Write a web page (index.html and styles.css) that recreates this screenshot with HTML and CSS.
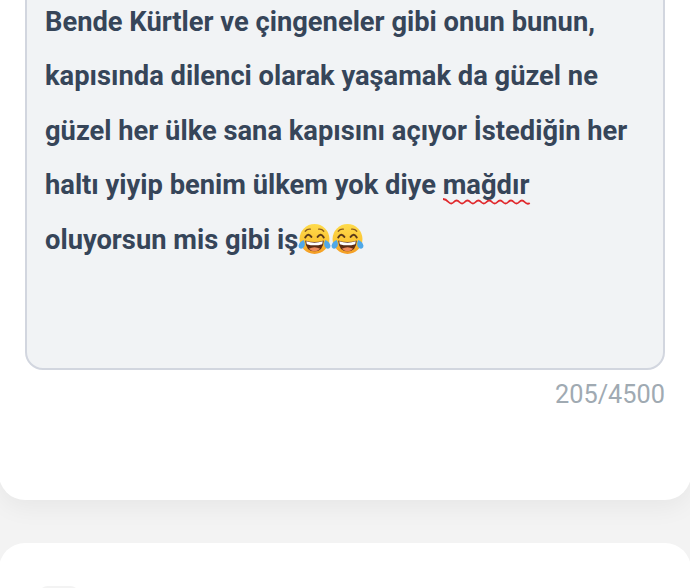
FILE: index.html
```html
<!DOCTYPE html>
<html lang="tr">
<head>
<meta charset="utf-8">
<title>Yorum</title>
<link rel="stylesheet" href="styles.css">
</head>
<body>
<main class="page">
  <section class="card card-form">
    <div class="textarea">
      <p class="line">Bende Kürtler ve çingeneler gibi onun bunun,</p>
      <p class="line">kapısında dilenci olarak yaşamak da güzel ne</p>
      <p class="line">güzel her ülke sana kapısını açıyor İstediğin her</p>
      <p class="line">haltı yiyip benim ülkem yok diye <span class="misspelled">mağdır<svg class="squiggle" viewBox="0 0 86 8" preserveAspectRatio="none" aria-hidden="true"><path d="M0 2 Q2.700 2 5.400 5 T10.800 5 T16.200 5 T21.600 5 T27 5 T32.400 5 T37.800 5 T43.200 5 T48.600 5 T54 5 T59.400 5 T64.800 5 T70.200 5 T75.600 5 T81 5 T86 6"/></svg></span></p>
      <p class="line">oluyorsun mis gibi iş<svg class="emoji" viewBox="0 0 32 32" aria-hidden="true"><use href="#joy"/></svg><svg class="emoji" viewBox="0 0 32 32" aria-hidden="true"><use href="#joy"/></svg></p>
    </div>
    <div class="counter">205/4500</div>
  </section>
  <section class="card card-next">
    <div class="pill"></div>
  </section>
</main>
<svg class="defs" width="0" height="0" aria-hidden="true">
  <defs>
    <linearGradient id="face" x1="0" y1="0" x2="0" y2="1">
      <stop offset="0" stop-color="#fedb4c"/>
      <stop offset="0.600" stop-color="#fbc433"/>
      <stop offset="1" stop-color="#f49a24"/>
    </linearGradient>
    <symbol id="joy" viewBox="0 0 32 32">
      <circle cx="16" cy="15.500" r="14.500" fill="url(#face)"/>
      <path d="M7 8 Q9 5.500 12 6" fill="none" stroke="#8a5a1e" stroke-width="1.200" stroke-linecap="round"/>
      <path d="M20 6 Q23 5.500 25 8" fill="none" stroke="#8a5a1e" stroke-width="1.200" stroke-linecap="round"/>
      <path d="M7 14 Q9.800 9 13 13.500" fill="none" stroke="#5b3a1a" stroke-width="1.900" stroke-linecap="round"/>
      <path d="M19 13.500 Q22.200 9 25 14" fill="none" stroke="#5b3a1a" stroke-width="1.900" stroke-linecap="round"/>
      <path d="M7 17 Q16 20 25 17 Q24.500 27.500 16 27.500 Q7.500 27.500 7 17Z" fill="#5b2c14"/>
      <path d="M8 17.800 Q16 20.400 24 17.800 L23.500 20.500 Q16 22.800 8.500 20.500Z" fill="#fff"/>
      <path d="M10.500 25 Q16 22 21.500 25 Q19 27.500 16 27.500 Q13 27.500 10.500 25Z" fill="#ee8a5c"/>
      <path d="M0.500 22 Q1.500 18 5.500 16.500 Q7.500 20 6 23 Q4.500 25.500 2 24.800 Q0.500 24 0.500 22Z" fill="#4fa8e8"/>
      <path d="M31.500 22 Q30.500 18 26.500 16.500 Q24.500 20 26 23 Q27.500 25.500 30 24.800 Q31.500 24 31.500 22Z" fill="#4fa8e8"/>
    </symbol>
  </defs>
</svg>
</body>
</html>
```
FILE: styles.css
```css
html, body {
  margin: 0;
  padding: 0;
  height: 100%;
  overflow: hidden;
  background: #f3f3f3;
  font-family: Roboto, "Liberation Sans", sans-serif;
}

.page {
  display: flex;
  flex-direction: column;
  gap: 43px;
  margin-top: -100px;
}

.card {
  background: #fff;
  border-radius: 26px;
  margin: 0 -1px;
  padding: 0 26px;
}

.card-form {
  height: 600px;
  box-shadow: 0 8px 24px rgba(0, 0, 0, 0.05);
  display: flex;
  flex-direction: column;
  align-items: stretch;
}

.textarea {
  box-sizing: border-box;
  height: 470px;
  padding: 92.500px 18px 0;
  background: #f1f3f5;
  border: 2px solid #d2d6df;
  border-radius: 18px;
}

.line {
  margin: 0;
  height: 54.500px;
  font-size: 27.300px;
  line-height: 54.500px;
  font-weight: 700;
  color: #364559;
  white-space: nowrap;
}

.misspelled {
  position: relative;
  display: inline-block;
}

.squiggle {
  position: absolute;
  left: 0;
  right: 0;
  bottom: 8px;
  width: 100%;
  height: 8px;
  overflow: visible;
}

.squiggle path {
  fill: none;
  stroke: #e0282c;
  stroke-width: 1.800;
  vector-effect: non-scaling-stroke;
}

.emoji {
  width: 33px;
  height: 33px;
  vertical-align: -7px;
}

.counter {
  margin-top: 10px;
  text-align: right;
  font-size: 25.300px;
  line-height: 30px;
  font-weight: 400;
  color: #a0aab2;
}

.card-next {
  height: 45px;
  padding-top: 43px;
  box-sizing: border-box;
  border-radius: 26px 26px 0 0;
  overflow: hidden;
}

.pill {
  width: 42px;
  height: 30px;
  margin-left: 13px;
  border-radius: 10px;
  background: #f3f3f3;
}

.defs {
  position: absolute;
}
```
